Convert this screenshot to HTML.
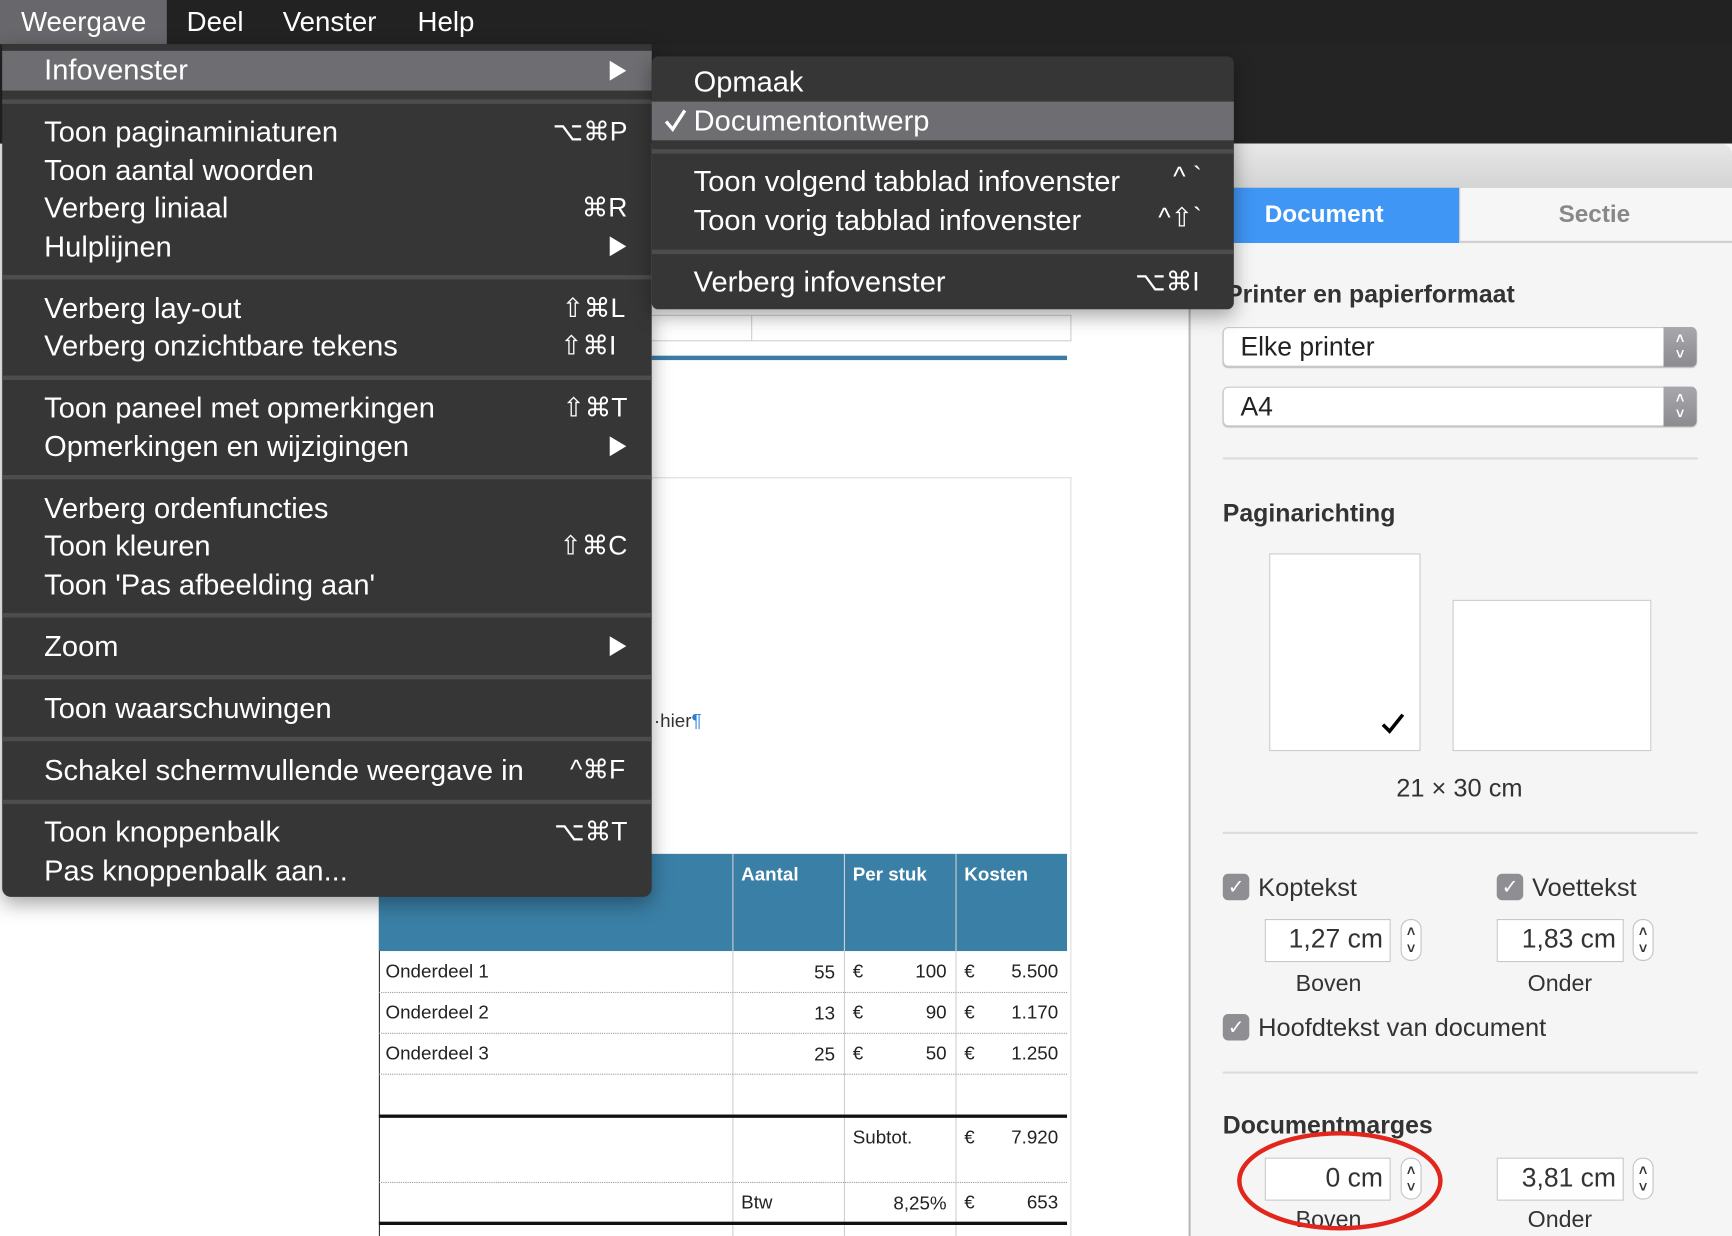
<!DOCTYPE html>
<html><head><meta charset="utf-8"><style>
*{margin:0;padding:0;box-sizing:border-box}
html,body{width:1732px;height:1236px;overflow:hidden;background:#fff}
#s{position:absolute;left:0;top:0;width:1568px;height:1119px;transform:scale(1.10459);transform-origin:0 0;font-family:"Liberation Sans",Arial,sans-serif;overflow:hidden;background:#fff}
.a{position:absolute}
.mi{position:absolute;left:40px;color:#fff;font-size:26.3px;line-height:35px;white-space:nowrap}
.sc{position:absolute;color:#fff;font-size:24px;line-height:35px;text-align:right;white-space:nowrap}
.sep{position:absolute;height:4px;background:#4d4d4d}
.arr{position:absolute;width:0;height:0;border-top:9px solid transparent;border-bottom:9px solid transparent;border-left:15px solid #fff}
.t{position:absolute;font-size:17px;color:#222;white-space:nowrap}
.th{position:absolute;font-size:17px;color:#fff;font-weight:bold}
.pl{position:absolute;font-size:23px;color:#333;white-space:nowrap}
.b{font-weight:bold}
.fld{position:absolute;background:#fff;border:1px solid #c8c8c8;font-size:24px;color:#333;text-align:right;padding-right:6px;line-height:36px}
.stp{position:absolute;width:19px;height:38px;border:1px solid #c4c4c4;border-radius:9px;background:#fff;font-size:13px;font-weight:bold;color:#333;text-align:center;line-height:15px;padding-top:3px}
.cb{position:absolute;width:24px;height:24px;border-radius:5px;background:#8e8e93;color:#fff;font-size:18px;text-align:center;line-height:24px}
.hl{position:absolute;height:2px;background:#dcdcdc;left:1107px;width:430px}
</style></head><body><div id="s">
<div class="a" style="left:0;top:0;width:1568px;height:130px;background:#242424"></div>
<div class="a" style="left:0;top:0;width:1568px;height:40px;background:#222"></div>
<div class="a" style="left:0;top:0;width:151px;height:40px;background:#68686c"></div>
<div class="a" style="left:19px;top:6px;font-size:25px;color:#fff">Weergave</div>
<div class="a" style="left:169px;top:6px;font-size:25px;color:#fff">Deel</div>
<div class="a" style="left:256px;top:6px;font-size:25px;color:#fff">Venster</div>
<div class="a" style="left:378px;top:6px;font-size:25px;color:#fff">Help</div>

<div class="a" style="left:590px;top:280px;width:486px;height:839px;background:#fff"></div>
<div class="a" style="left:590px;top:285px;width:380px;height:24px;border:1px solid #d0d0d0;border-left:none"></div>
<div class="a" style="left:680px;top:285px;width:1px;height:24px;background:#d0d0d0"></div>
<div class="a" style="left:590px;top:322px;width:376px;height:4px;background:#3a7ca5"></div>
<div class="a" style="left:590px;top:432px;width:380px;height:700px;border:1px solid #ddd;border-left:none"></div>
<div class="a" style="left:592px;top:643px;font-size:17px;color:#333">·hier<span style="color:#2a7fd4">¶</span></div>
<div class="a" style="left:343px;top:773px;width:1px;height:346px;background:#333"></div>
<div class="a" style="left:343px;top:773px;width:623px;height:88px;background:#3a7fa6"></div>
<div class="a" style="left:663px;top:773px;width:1px;height:346px;background:#cfcfcf"></div>
<div class="a" style="left:764px;top:773px;width:1px;height:346px;background:#cfcfcf"></div>
<div class="a" style="left:865px;top:773px;width:1px;height:346px;background:#cfcfcf"></div>
<div class="th" style="left:671px;top:782px">Aantal</div>
<div class="th" style="left:772px;top:782px">Per stuk</div>
<div class="th" style="left:873px;top:782px">Kosten</div>
<div class="a" style="left:343px;top:898px;width:623px;border-top:1px dotted #999"></div>
<div class="a" style="left:343px;top:935px;width:623px;border-top:1px dotted #999"></div>
<div class="a" style="left:343px;top:972px;width:623px;border-top:1px dotted #999"></div>
<div class="a" style="left:343px;top:1009px;width:623px;height:3px;background:#111"></div>
<div class="a" style="left:343px;top:1070px;width:623px;border-top:1px dotted #999"></div>
<div class="a" style="left:343px;top:1106px;width:623px;height:3px;background:#111"></div>
<div class="t" style="left:349px;top:870px">Onderdeel 1</div>
<div class="t" style="left:349px;top:907px">Onderdeel 2</div>
<div class="t" style="left:349px;top:944px">Onderdeel 3</div>
<div class="t" style="right:812px;top:871px">55</div><div class="t" style="left:772px;top:870px">€</div><div class="t" style="right:711px;top:870px">100</div><div class="t" style="left:873px;top:870px">€</div><div class="t" style="right:610px;top:870px">5.500</div>
<div class="t" style="right:812px;top:908px">13</div><div class="t" style="left:772px;top:907px">€</div><div class="t" style="right:711px;top:907px">90</div><div class="t" style="left:873px;top:907px">€</div><div class="t" style="right:610px;top:907px">1.170</div>
<div class="t" style="right:812px;top:945px">25</div><div class="t" style="left:772px;top:944px">€</div><div class="t" style="right:711px;top:944px">50</div><div class="t" style="left:873px;top:944px">€</div><div class="t" style="right:610px;top:944px">1.250</div>
<div class="t" style="left:772px;top:1020px">Subtot.</div><div class="t" style="left:873px;top:1020px">€</div><div class="t" style="right:610px;top:1020px">7.920</div>
<div class="t" style="left:671px;top:1079px">Btw</div><div class="t" style="right:711px;top:1080px">8,25%</div><div class="t" style="left:873px;top:1079px">€</div><div class="t" style="right:610px;top:1079px">653</div>

<div class="a" style="left:1076px;top:130px;width:500px;height:989px;background:#f5f5f5;border-left:2px solid #b8b8b8;border-radius:0 10px 0 0"></div>
<div class="a" style="left:1078px;top:130px;width:490px;height:40px;background:linear-gradient(#e8e8e8,#d4d4d4);border-radius:0 10px 0 0;border-bottom:1px solid #c0c0c0"></div>
<div class="a" style="left:1078px;top:170px;width:243px;height:50px;background:#3f96f5"></div>
<div class="a" style="left:1145px;top:181px;font-size:22px;color:#fff"><b>Document</b></div>
<div class="a" style="left:1321px;top:170px;width:247px;height:50px;background:#f6f6f6;border-left:1px solid #c8c8c8;border-bottom:2px solid #d0d0d0"></div>
<div class="a" style="left:1411px;top:181px;font-size:22px;color:#888"><b>Sectie</b></div>
<div class="pl b" style="left:1110px;top:254px;font-size:22.5px">Printer en papierformaat</div>
<div class="a" style="left:1107px;top:296px;width:429px;height:36px;background:#fff;border:1px solid #ccc;border-radius:5px;box-shadow:0 1px 1px #bbb"></div>
<div class="a" style="left:1506px;top:296px;width:30px;height:36px;background:linear-gradient(#a8a8ac,#8c8c90);border-radius:0 5px 5px 0;color:#fff;font-size:13px;font-weight:bold;text-align:center;line-height:14px;padding-top:4px">˄<br>˅</div>
<div class="pl" style="left:1123px;top:301px;font-size:24px;color:#222">Elke printer</div>
<div class="a" style="left:1107px;top:350px;width:429px;height:36px;background:#fff;border:1px solid #ccc;border-radius:5px;box-shadow:0 1px 1px #bbb"></div>
<div class="a" style="left:1506px;top:350px;width:30px;height:36px;background:linear-gradient(#a8a8ac,#8c8c90);border-radius:0 5px 5px 0;color:#fff;font-size:13px;font-weight:bold;text-align:center;line-height:14px;padding-top:4px">˄<br>˅</div>
<div class="pl" style="left:1123px;top:355px;font-size:24px;color:#222">A4</div>
<div class="hl" style="top:414px"></div>
<div class="pl b" style="left:1107px;top:452px;font-size:22.5px">Paginarichting</div>
<div class="a" style="left:1149px;top:501px;width:137px;height:179px;background:#fff;border:1px solid #ccc"></div>
<svg class="a" style="left:1250px;top:645px" width="22" height="20"><path d="M2 11 L8 17 L20 2" fill="none" stroke="#000" stroke-width="3.2"/></svg>
<div class="a" style="left:1315px;top:543px;width:180px;height:137px;background:#fff;border:1px solid #ccc"></div>
<div class="pl" style="left:1264px;top:700px">21 × 30 cm</div>
<div class="hl" style="top:753px"></div>
<div class="cb" style="left:1107px;top:791px">✓</div><div class="pl" style="left:1139px;top:790px">Koptekst</div>
<div class="cb" style="left:1355px;top:791px">✓</div><div class="pl" style="left:1387px;top:790px">Voettekst</div>
<div class="fld" style="left:1145px;top:832px;width:114px;height:39px">1,27 cm</div><div class="stp" style="left:1268px;top:832px">˄<br>˅</div>
<div class="fld" style="left:1355px;top:832px;width:115px;height:39px">1,83 cm</div><div class="stp" style="left:1478px;top:832px">˄<br>˅</div>
<div class="pl" style="left:1173px;top:879px;font-size:21px">Boven</div>
<div class="pl" style="left:1383px;top:879px;font-size:21px">Onder</div>
<div class="cb" style="left:1107px;top:918px">✓</div><div class="pl" style="left:1139px;top:917px">Hoofdtekst van document</div>
<div class="hl" style="top:970px"></div>
<div class="pl b" style="left:1107px;top:1006px;font-size:22.5px">Documentmarges</div>
<div class="fld" style="left:1145px;top:1048px;width:114px;height:39px">0 cm</div><div class="stp" style="left:1268px;top:1048px">˄<br>˅</div>
<div class="fld" style="left:1355px;top:1048px;width:115px;height:39px">3,81 cm</div><div class="stp" style="left:1478px;top:1048px">˄<br>˅</div>
<div class="pl" style="left:1173px;top:1093px;font-size:21px">Boven</div>
<div class="pl" style="left:1383px;top:1093px;font-size:21px">Onder</div>
<svg class="a" style="left:1110px;top:1015px" width="210" height="110"><ellipse cx="103" cy="54" rx="91" ry="43" fill="none" stroke="#e2261c" stroke-width="4"/></svg>

<div class="a" style="left:2px;top:40px;width:588px;height:772px;background:#363636;border-radius:0 0 8px 8px;box-shadow:0 6px 18px rgba(0,0,0,.35)"></div>
<div class="a" style="left:2px;top:46px;width:588px;height:36px;background:#6e6e72"></div>
<div class="mi" style="top:46px">Infovenster</div><div class="arr" style="left:552px;top:55px"></div>
<div class="sep" style="left:2px;top:90px;width:588px"></div>
<div class="mi" style="top:102px">Toon paginaminiaturen</div><div class="sc" style="right:1000px;top:102px">⌥⌘P</div>
<div class="mi" style="top:137px">Toon aantal woorden</div>
<div class="mi" style="top:171px">Verberg liniaal</div><div class="sc" style="right:1000px;top:171px">⌘R</div>
<div class="mi" style="top:206px">Hulplijnen</div><div class="arr" style="left:552px;top:214px"></div>
<div class="sep" style="left:2px;top:249px;width:588px"></div>
<div class="mi" style="top:262px">Verberg lay-out</div><div class="sc" style="right:1002px;top:262px">⇧⌘L</div>
<div class="mi" style="top:296px">Verberg onzichtbare tekens</div><div class="sc" style="right:1010px;top:296px">⇧⌘I</div>
<div class="sep" style="left:2px;top:340px;width:588px"></div>
<div class="mi" style="top:352px">Toon paneel met opmerkingen</div><div class="sc" style="right:1000px;top:352px">⇧⌘T</div>
<div class="mi" style="top:387px">Opmerkingen en wijzigingen</div><div class="arr" style="left:552px;top:395px"></div>
<div class="sep" style="left:2px;top:430px;width:588px"></div>
<div class="mi" style="top:443px">Verberg ordenfuncties</div>
<div class="mi" style="top:477px">Toon kleuren</div><div class="sc" style="right:1000px;top:477px">⇧⌘C</div>
<div class="mi" style="top:512px">Toon 'Pas afbeelding aan'</div>
<div class="sep" style="left:2px;top:555px;width:588px"></div>
<div class="mi" style="top:568px">Zoom</div><div class="arr" style="left:552px;top:576px"></div>
<div class="sep" style="left:2px;top:611px;width:588px"></div>
<div class="mi" style="top:624px">Toon waarschuwingen</div>
<div class="sep" style="left:2px;top:667px;width:588px"></div>
<div class="mi" style="top:680px">Schakel schermvullende weergave in</div><div class="sc" style="right:1002px;top:680px">^⌘F</div>
<div class="sep" style="left:2px;top:724px;width:588px"></div>
<div class="mi" style="top:736px">Toon knoppenbalk</div><div class="sc" style="right:1000px;top:736px">⌥⌘T</div>
<div class="mi" style="top:771px">Pas knoppenbalk aan...</div>

<div class="a" style="left:590px;top:51px;width:527px;height:229px;background:#363636;border-radius:6px;box-shadow:0 6px 18px rgba(0,0,0,.35)"></div>
<div class="mi" style="left:628px;top:57px">Opmaak</div>
<div class="a" style="left:590px;top:92px;width:527px;height:35px;background:#6e6e72"></div>
<svg class="a" style="left:601px;top:98px" width="22" height="22"><path d="M2 12 L8 19 L19 2" fill="none" stroke="#fff" stroke-width="3"/></svg>
<div class="mi" style="left:628px;top:92px">Documentontwerp</div>
<div class="sep" style="left:590px;top:135px;width:527px"></div>
<div class="mi" style="left:628px;top:147px">Toon volgend tabblad infovenster</div><div class="sc" style="right:480px;top:143px">^ `</div>
<div class="mi" style="left:628px;top:182px">Toon vorig tabblad infovenster</div><div class="sc" style="right:480px;top:180px">^⇧`</div>
<div class="sep" style="left:590px;top:226px;width:527px"></div>
<div class="mi" style="left:628px;top:238px">Verberg infovenster</div><div class="sc" style="right:482px;top:238px">⌥⌘I</div>
</div></body></html>
